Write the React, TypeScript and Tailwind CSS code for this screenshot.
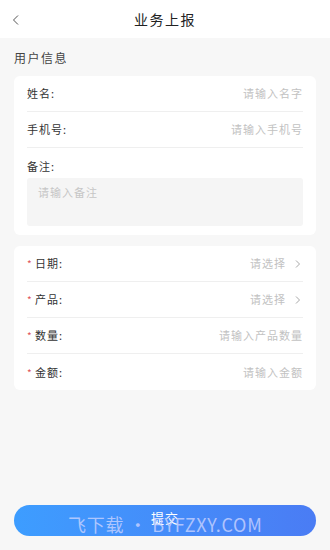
const font = { fontFamily: '"Noto Sans CJK SC", "Noto Sans", sans-serif' };

function Row({ label, placeholder, required, arrow, last }: { label: string; placeholder: string; required?: boolean; arrow?: boolean; last?: boolean }) {
  return (
    <div className={`flex h-[36px] items-center ${last ? "" : "border-b border-[#efefef]"}`}>
      {required !== undefined && <span className="mr-[4px] w-[4px] text-[10px] text-[#e0555a]">*</span>}
      <span className="text-[11px] tracking-[1px] text-[#333]">{label}:</span>
      <span className="ml-auto text-[11px] tracking-[1px] text-[#c2c2c2]">{placeholder}</span>
      {arrow && (
        <svg width="8" height="10" viewBox="0 0 8 10" className="ml-[8px] mr-[1px]">
          <path d="M2 1.5l3.5 3.5-3.5 3.5" fill="none" stroke="#a8a8a8" strokeWidth="1" />
        </svg>
      )}
    </div>
  );
}

export default function App() {
  return (
    <div className="flex min-h-[550px] w-[330px] flex-col bg-[#f7f7f7]" style={font}>
      <div className="relative flex h-[38px] items-center justify-center bg-white">
        <svg width="8" height="12" viewBox="0 0 8 12" className="absolute left-[12px] top-[14px]">
          <path d="M6 1.5L1.5 6 6 10.5" fill="none" stroke="#555" strokeWidth="1" />
        </svg>
        <span className="text-[14px] tracking-[1.5px] text-[#222]">业务上报</span>
      </div>

      <div className="px-[14px] pt-[11px] pb-[9px] text-[12px] tracking-[1.5px] text-[#444]">用户信息</div>

      <div className="mx-[14px] rounded-[6px] bg-white px-[13px] pb-[9px]">
        <Row label="姓名" placeholder="请输入名字" />
        <Row label="手机号" placeholder="请输入手机号" />
        <div className="flex h-[37px] items-center">
          <span className="text-[11px] tracking-[1px] text-[#333]">备注:</span>
        </div>
        <div className="-mt-[7px] h-[48px] rounded-[3px] bg-[#f5f5f5] px-[11px] pt-[6px] text-[11px] tracking-[1px] text-[#c6c6c6]">请输入备注</div>
      </div>

      <div className="mx-[14px] mt-[11px] rounded-[6px] bg-white px-[13px]">
        <Row label="日期" placeholder="请选择" required arrow />
        <Row label="产品" placeholder="请选择" required arrow />
        <Row label="数量" placeholder="请输入产品数量" required />
        <Row label="金额" placeholder="请输入金额" required last />
      </div>

      <div className="flex-1" />

      <div className="relative mx-[14px] mb-[14px] flex h-[31px] items-center justify-center rounded-full bg-gradient-to-r from-[#3d9dff] to-[#4a7cf4]">
        <span className="-mt-[6px] text-[13px] tracking-[1px] text-white">提交</span>
        <span className="absolute left-[54px] top-[10px] text-[18px] leading-none tracking-[0.7px] text-[#c9d3ff] opacity-80" style={{ fontFamily: '"Noto Sans CJK SC", "Open Sans", sans-serif' }}>
          飞下载 • BYFZXY.COM
        </span>
      </div>
    </div>
  );
}
